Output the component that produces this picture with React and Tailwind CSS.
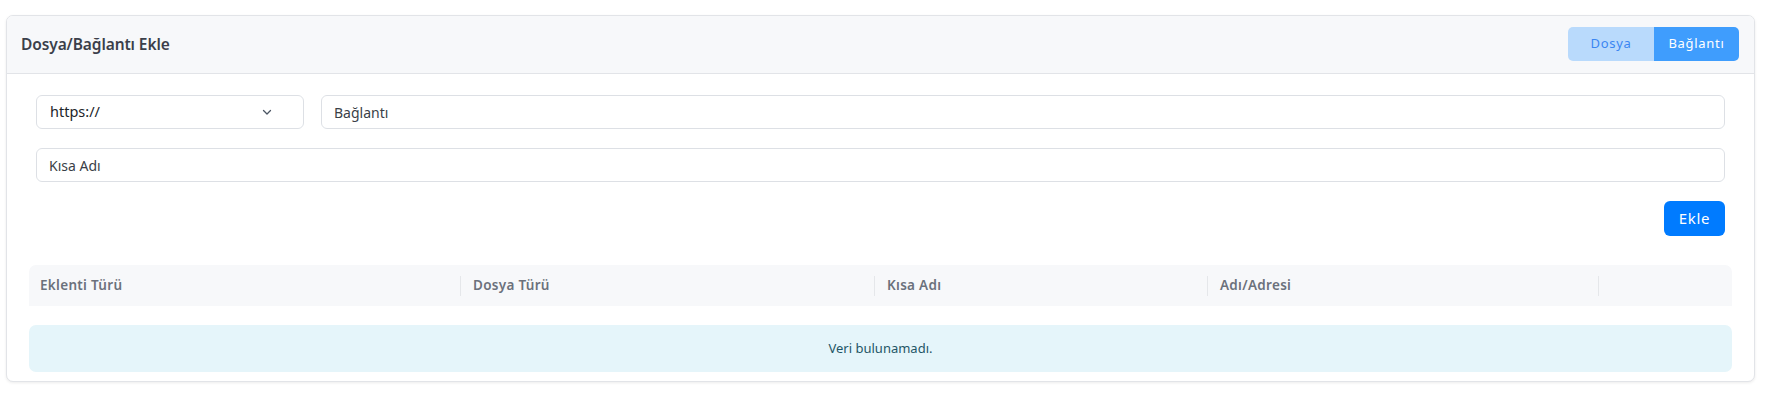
import React from "react";

function Chevron() {
  return (
    <svg width="12" height="12" viewBox="0 0 12 12" fill="none" className="text-[#4b5563]">
      <path d="M2.5 4.5 L6 8 L9.5 4.5" stroke="currentColor" strokeWidth="1.3" strokeLinecap="round" strokeLinejoin="round" />
    </svg>
  );
}

export default function App() {
  const cols = [
    { label: "Eklenti Türü", w: "w-[431px]" },
    { label: "Dosya Türü", w: "w-[414px]" },
    { label: "Kısa Adı", w: "w-[333px]" },
    { label: "Adı/Adresi", w: "w-[391px]" },
    { label: "", w: "flex-1" },
  ];
  return (
    <div className="bg-white min-h-[404px] pt-[15px] pl-[6px]" style={{ fontFamily: '"Noto Sans", "Open Sans", sans-serif' }}>
      <div className="w-[1749px] rounded-[7px] border border-[#e2e4e8] bg-white shadow-[0_1px_3px_rgba(0,0,0,0.08)] overflow-hidden">
        {/* header */}
        <div className="h-[58px] bg-[#f7f8fa] border-b border-[#e2e4e8] flex items-center justify-between pl-[14px] pr-[15px]">
          <h2 className="text-[15.5px] font-semibold text-[#3b3f4a] tracking-[-0.1px]">Dosya/Bağlantı Ekle</h2>
          <div className="flex h-[34px] rounded-[5px] overflow-hidden mt-[-1px]">
            <button className="w-[86px] bg-[#b9dafc] text-[#3b86f2] text-[13px] tracking-[0.7px]">Dosya</button>
            <button className="w-[85px] bg-[#3f9dfd] text-white text-[13px] tracking-[0.7px]">Bağlantı</button>
          </div>
        </div>
        {/* body */}
        <div className="px-[22px] pt-[21px] pb-[9px]">
          <div className="mx-[7px] flex flex-col gap-[19px]">
            <div className="flex gap-[17px]">
              <div className="w-[268px] h-[34px] rounded-[6px] border border-[#dde0e5] flex items-center justify-between pl-[13px] pr-[30px] text-[14.5px] text-[#212529]">
                <span>https://</span>
                <Chevron />
              </div>
              <input
                className="flex-1 h-[34px] rounded-[6px] border border-[#dde0e5] px-[12px] text-[14px] text-[#212529] placeholder:text-[#3a3f47] outline-none"
                placeholder="Bağlantı"
              />
            </div>
            <input
              className="w-full h-[34px] rounded-[6px] border border-[#dde0e5] px-[12px] text-[14px] text-[#212529] placeholder:text-[#3a3f47] outline-none"
              placeholder="Kısa Adı"
            />
            <div className="flex justify-end">
              <button className="w-[61px] h-[35px] rounded-[6px] bg-[#007bff] text-white text-[15px] tracking-[0.7px]">Ekle</button>
            </div>
          </div>
          {/* table */}
          <div className="mt-[29px]">
            <div className="flex h-[41px] bg-[#f7f8fa] rounded-t-[7px] items-center">
              {cols.map((c, i) => (
                <div key={i} className={`${c.w} h-full flex items-center relative ${i === 0 ? "pl-[11px]" : "pl-[13px]"}`}>
                  {i > 0 && <span className="absolute left-0 top-[11px] h-[20px] w-px bg-[#e5e7ea]" />}
                  <span className="text-[13.5px] font-semibold text-[#6b717c] tracking-[0.3px]">{c.label}</span>
                </div>
              ))}
            </div>
            <div className="mt-[19px] h-[47px] rounded-[7px] bg-[#e5f5fa] flex items-center justify-center text-[13px] text-[#1f5566]">
              Veri bulunamadı.
            </div>
          </div>
        </div>
      </div>
    </div>
  );
}
